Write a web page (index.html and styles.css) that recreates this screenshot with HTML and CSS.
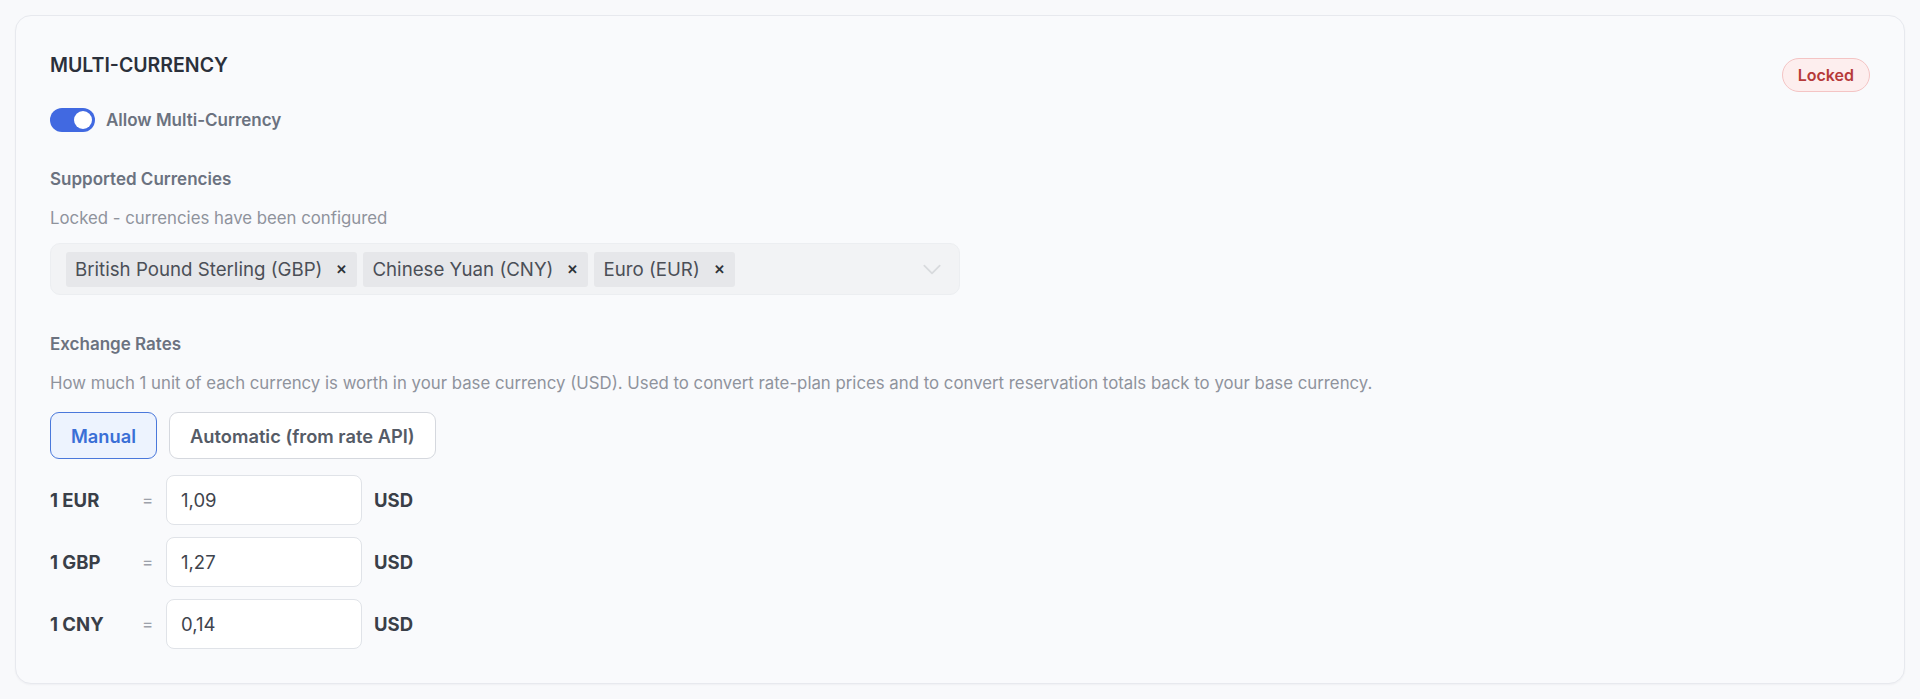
FILE: index.html
```html
<!DOCTYPE html>
<html lang="en">
<head>
<meta charset="utf-8">
<title>Multi-Currency</title>
<link rel="stylesheet" href="styles.css">
</head>
<body>
<section class="card">
  <div class="card-head">
    <div class="head-left">
      <h2 class="title">MULTI-CURRENCY</h2>
      <label class="toggle-row">
        <span class="toggle"><span class="knob"></span></span>
        <span class="toggle-label">Allow Multi-Currency</span>
      </label>
    </div>
    <span class="badge">Locked</span>
  </div>

  <div class="field">
    <div class="field-label">Supported Currencies</div>
    <div class="field-hint">Locked - currencies have been configured</div>
    <div class="select">
      <div class="tags">
        <span class="tag">British Pound Sterling (GBP)<span class="tag-x">&#x2715;</span></span>
        <span class="tag">Chinese Yuan (CNY)<span class="tag-x">&#x2715;</span></span>
        <span class="tag">Euro (EUR)<span class="tag-x">&#x2715;</span></span>
      </div>
      <svg class="chevron" width="22" height="22" viewBox="0 0 20 20" fill="none"><path d="M3 7l7 7 7-7" stroke="currentColor" stroke-width="1.6" stroke-linecap="round" stroke-linejoin="round"/></svg>
    </div>
  </div>

  <div class="field rates">
    <div class="field-label">Exchange Rates</div>
    <div class="field-hint">How much 1 unit of each currency is worth in your base currency (USD). Used to convert rate-plan prices and to convert reservation totals back to your base currency.</div>
    <div class="seg">
      <button class="seg-btn active">Manual</button>
      <button class="seg-btn">Automatic (from rate API)</button>
    </div>
    <div class="rate-list">
      <div class="rate-row">
        <span class="rate-code">1 EUR</span>
        <span class="rate-eq">=</span>
        <input class="rate-input" type="text" value="1,09">
        <span class="rate-base">USD</span>
      </div>
      <div class="rate-row">
        <span class="rate-code">1 GBP</span>
        <span class="rate-eq">=</span>
        <input class="rate-input" type="text" value="1,27">
        <span class="rate-base">USD</span>
      </div>
      <div class="rate-row">
        <span class="rate-code">1 CNY</span>
        <span class="rate-eq">=</span>
        <input class="rate-input" type="text" value="0,14">
        <span class="rate-base">USD</span>
      </div>
    </div>
  </div>
</section>
</body>
</html>
```
FILE: styles.css
```css
* { box-sizing: border-box; }
html, body { margin: 0; }
body {
  background: #f8f9fb;
  font-family: Inter, "Noto Sans", "Liberation Sans", sans-serif;
  color: #374151;
  padding: 15px;
}
.card {
  width: 1890px;
  height: 669px;
  background: #f9fafc;
  border: 1px solid #e7e9ee;
  border-radius: 16px;
  box-shadow: 0 1px 2px rgba(16, 24, 40, 0.04);
  padding: 36px 34px 34px 34px;
}
.card-head {
  display: flex;
  justify-content: space-between;
  align-items: flex-start;
}
.head-left { display: flex; flex-direction: column; }
.title {
  margin: 0;
  font-size: 19.5px;
  line-height: 26px;
  font-weight: 600;
  color: #2b303b;
}
.toggle-row {
  display: flex;
  align-items: center;
  gap: 11px;
  margin-top: 30px;
}
.toggle {
  width: 45px;
  height: 24px;
  border-radius: 12px;
  background: #4169e1;
  display: flex;
  align-items: center;
  justify-content: flex-end;
  padding: 0 3px;
}
.knob {
  width: 18px;
  height: 18px;
  border-radius: 50%;
  background: #fff;
}
.toggle-label {
  font-size: 17px;
  font-weight: 600;
  color: #6b7280;
}
.badge {
  margin-top: 6px;
  height: 34px;
  padding: 0 15px;
  border-radius: 17px;
  background: #fdeeee;
  border: 1px solid #f4c4c4;
  color: #b63a3a;
  font-size: 16px;
  font-weight: 600;
  display: flex;
  align-items: center;
}
.field { margin-top: 35px; }
.field-label {
  font-size: 17px;
  line-height: 24px;
  font-weight: 600;
  color: #6b7280;
}
.field-hint {
  margin-top: 15px;
  font-size: 16.8px;
  line-height: 24px;
  color: #8f939c;
}
.select {
  margin-top: 13px;
  width: 910px;
  height: 52px;
  background: #f2f3f5;
  border: 1px solid #eceef1;
  border-radius: 10px;
  display: flex;
  align-items: center;
  justify-content: space-between;
  padding: 0 16px 0 15px;
}
.tags { display: flex; gap: 6px; }
.tag {
  display: flex;
  align-items: center;
  height: 35px;
  padding: 0 10px 0 9px;
  background: #e6e7ea;
  border-radius: 3px;
  font-size: 18.7px;
  color: #4b4f57;
}
.tag-x {
  margin-left: 14px;
  font-size: 13px;
  font-weight: 700;
  color: #2f3338;
}
.chevron { color: #d8dadd; }
.rates { margin-top: 37px; }
.seg {
  margin-top: 17px;
  display: flex;
  gap: 12px;
}
.seg-btn {
  height: 47px;
  padding: 0 20px;
  border-radius: 9px;
  border: 1px solid #d5d8de;
  background: #fff;
  font-family: inherit;
  font-size: 18.3px;
  font-weight: 600;
  color: #555b66;
}
.seg-btn.active {
  border-color: #4a78db;
  background: #edf3fe;
  color: #3a6fd6;
}
.rate-list {
  margin-top: 16px;
  display: flex;
  flex-direction: column;
  gap: 12px;
}
.rate-row {
  display: flex;
  align-items: center;
}
.rate-code {
  width: 92px;
  font-size: 18.5px;
  font-weight: 700;
  color: #3a3f48;
}
.rate-eq {
  width: 24px;
  font-size: 17px;
  color: #9ca1aa;
}
.rate-input {
  width: 196px;
  height: 50px;
  border: 1px solid #e0e3e8;
  border-radius: 8px;
  background: #fff;
  padding: 0 14px;
  font-family: inherit;
  font-size: 18.5px;
  color: #3f444d;
  outline: none;
}
.rate-base {
  margin-left: 12px;
  font-size: 18.5px;
  font-weight: 700;
  color: #3a3f48;
}
```
